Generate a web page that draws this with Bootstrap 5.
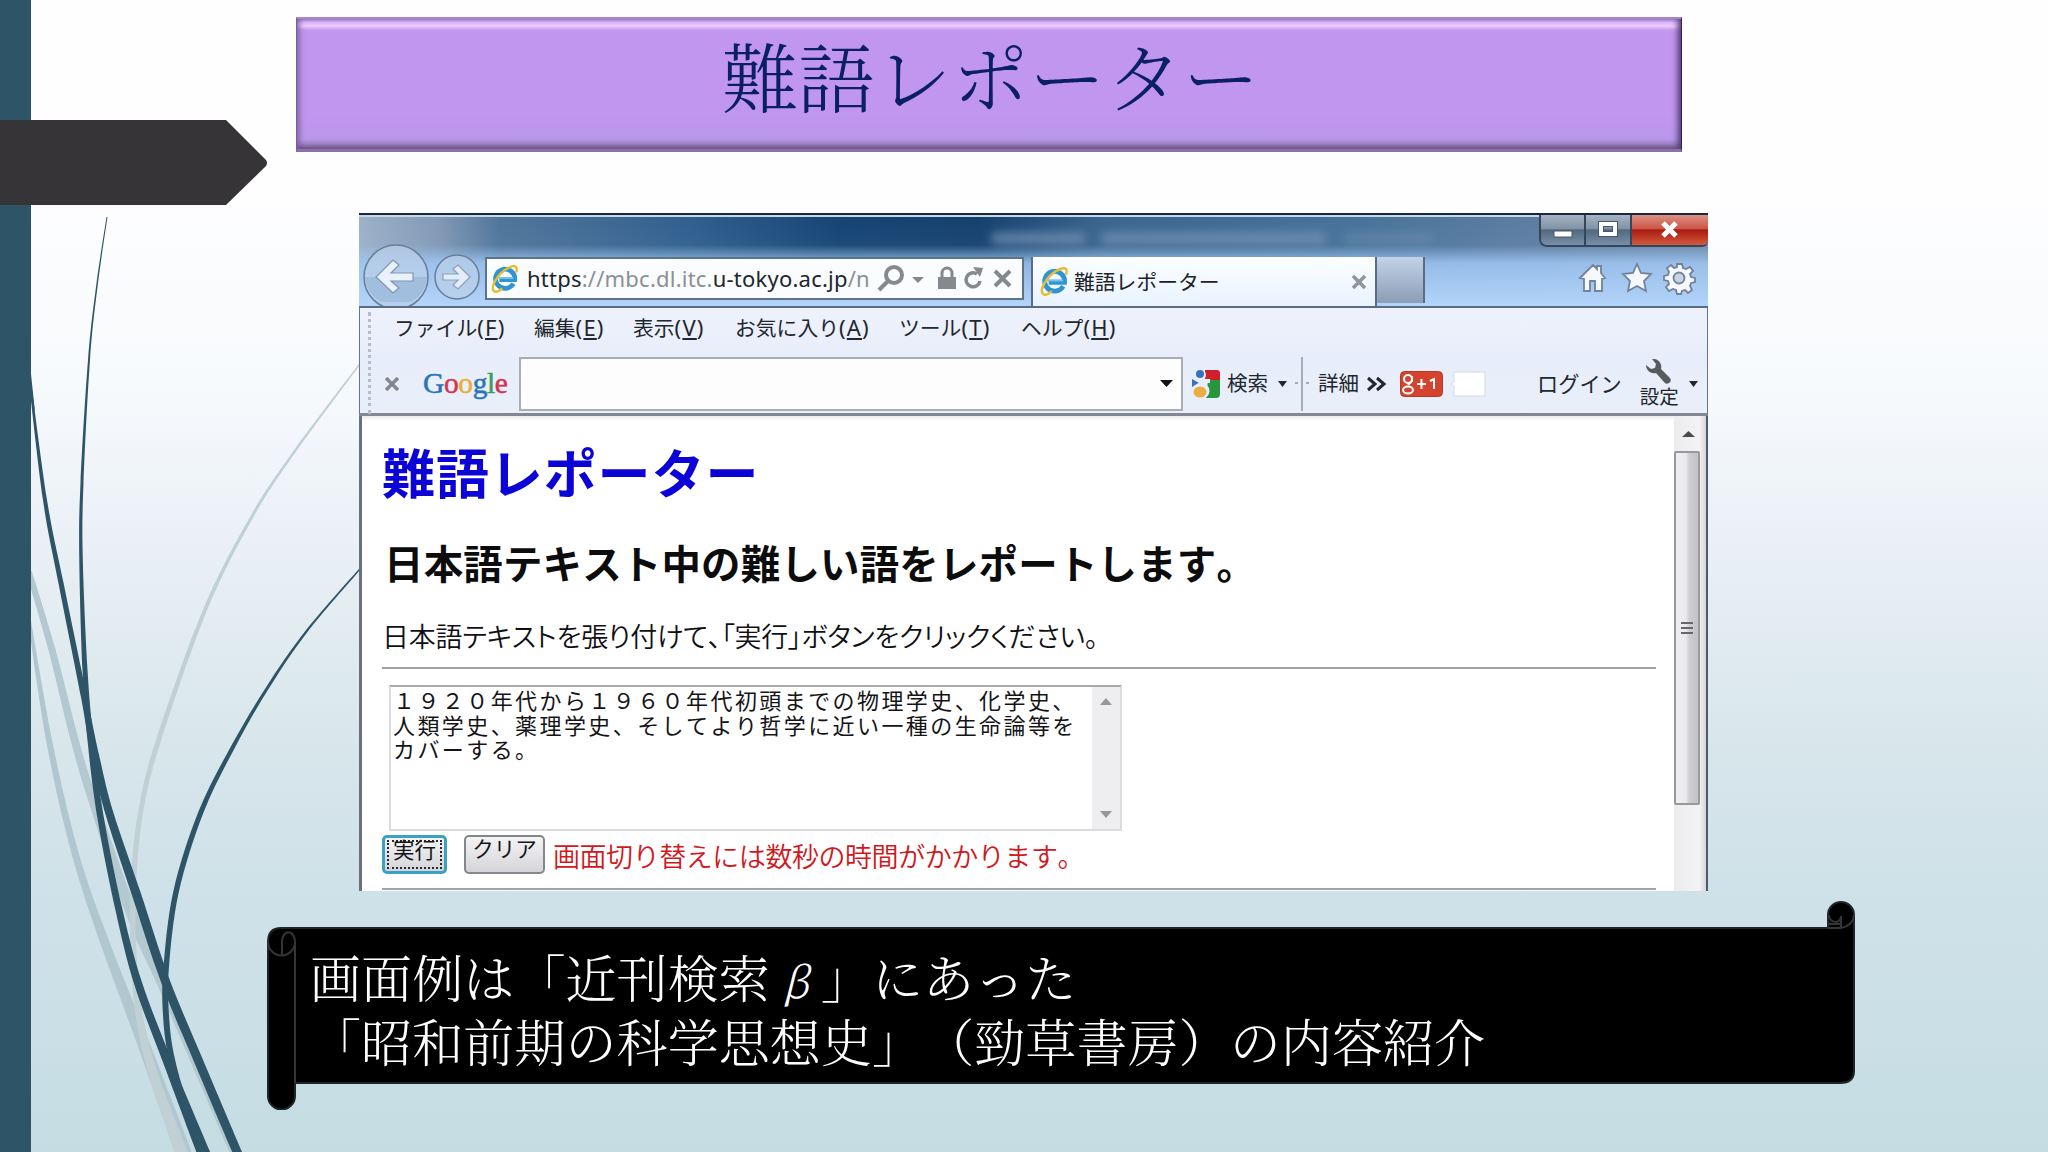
<!DOCTYPE html>
<html lang="ja">
<head>
<meta charset="utf-8">
<title>難語レポーター</title>
<link href="https://cdn.jsdelivr.net/npm/bootstrap@5.3.0/dist/css/bootstrap.min.css" rel="stylesheet">
<style>
body{margin:0;overflow:hidden;font-family:"Noto Sans CJK JP",sans-serif}
.slide{width:2048px;height:1152px;background:linear-gradient(#fefefe 0,#fefeff 190px,#f6f9fc 400px,#eaf0f6 540px,#dce9ed 690px,#d1e2e9 850px,#cadfe6 1040px,#c5dce3 1152px);overflow:hidden}
.decor{left:0;top:0;z-index:0}
.plate{width:1386px;height:135px;margin:17px 0 61px 296px;border-style:solid;border-width:2px 1px 3px 1px;border-color:#a586cd #2e2248 #8a72a8 #76609b;background:linear-gradient(#b48fe0 0,#e3bbfb 4px,#eec9ff 7px,#c79bef 11px,#c096ee 14px,#c096ee 96px,#ba97e9 120px,#9c80c4 125px,#745d8c 129px,#8b73a6 131px);box-shadow:inset 5px 0 6px -3px #75589c,inset -6px 0 6px -3px #4c3870;z-index:1}
.plate h1{font-family:"Noto Serif CJK JP","Noto Sans CJK JP",serif;font-weight:300;font-size:76.7px;line-height:110px;color:#0b1f66;margin:0;padding-left:3px;letter-spacing:.2px}
.win{width:1349px;height:678px;margin-left:359px;z-index:1;background:#fdfdfe}
.chrome{height:93px;border-top:2px solid #17283c;background:linear-gradient(180deg,rgba(255,255,255,0) 0,rgba(190,210,235,.05) 30px,rgba(160,200,245,.85) 48px,#b4d4fa 100%),linear-gradient(90deg,#9db1c8 0,#8199b5 80px,#50759b 140px,#2f5f8d 330px,#154472 480px,#14406e 620px,#3a648e 740px,#48729a 1000px,#5f7fa2 1200px,#6c88a8 100%)}
.chrome:before{content:"";position:absolute;left:0;right:0;top:0;height:2px;background:#c8d8e6}
.shade{filter:blur(4px);background:#7595b6;height:13px;border-radius:6px;opacity:.65}
.addr{width:539px;height:43px;border:2px solid #5c7488;background:#fbfcfe;font-family:"Noto Sans",sans-serif;font-size:22px;color:#8a9096}
.addr b{font-weight:400;color:#20262b}
.addr .url{width:341px;white-space:nowrap;letter-spacing:.22px}
.tabon{width:346px;height:49px;border-left:2px solid #596c82;border-right:2px solid #596c82;background:linear-gradient(#fcfeff,#e8f3fe);font-size:20.8px;color:#1d2228}
.tabnew{width:48px;height:46px;border-right:2px solid #596c82;background:linear-gradient(#c3d3e6,#8b9db7)}
.wbtns{right:0;top:0;width:169px;height:32px;border:2px solid #35455a;border-top:0;border-right:0;border-radius:0 0 6px 8px;overflow:hidden}
.wbtns>div{background:linear-gradient(#a5b4c4 0,#8193a6 45%,#52687f 50%,#7790a8 100%);width:46px;border-right:2px solid #35455a}
.wbtns>div:last-child{background:linear-gradient(#dc9185 0,#cc5647 45%,#a91c12 50%,#d35a3d 100%);width:77px;border-right:0}
.bars{height:110px;border:1px solid #64748c;border-top:2px solid #596c84;border-bottom:3px solid #818793;background:linear-gradient(#eef2fc,#e7edfa 50%,#eaf0fa);color:#22262d}
.grip{left:8px;top:4px;width:3px;height:102px;border-left:3px dotted #b3bdcd}
.menus{font-size:20.8px;line-height:38px;height:48px;padding-left:34px;white-space:nowrap}
.menus span{display:block}
.menus i{font-style:normal;font-family:"Noto Sans",sans-serif;font-size:22px;letter-spacing:1.2px}
.tools{height:56px;font-size:20.5px;white-space:nowrap}
.gbox{width:664px;height:54px;border:2px solid #a9adb4;background:#fdfdfe}
.logo{font-family:"Liberation Serif",serif;font-size:29.5px;letter-spacing:-.4px;width:96px;-webkit-text-stroke:.5px;margin-top:-2px}
.doc{height:475px;border-left:3px solid #6b717b;border-right:2px solid #4c5a6e}
.page{width:1312px;padding-left:20px;white-space:nowrap;background:linear-gradient(#ececef,#fff 5px);font-kerning:none;text-spacing-trim:space-all}
.page h2{font-weight:700;font-size:53px;letter-spacing:.9px;line-height:60px;color:#0c04d6;margin:0;padding-top:25px}
.page h3{font-weight:700;font-size:39.4px;letter-spacing:.25px;line-height:50px;color:#0c0c0c;margin:0;padding:36px 0 0 2px}
.page p{font-size:27px;font-feature-settings:"palt";letter-spacing:-.2px;line-height:36px;margin:0;padding-top:31px;font-weight:350;color:#101014}
.rule{width:1274px;height:2px;background:#a2a2a6}
.area{width:733px;height:146px;margin:16px 0 4px 7px;border:2px solid #dcdce0;border-top-color:#aaaaae;font-size:22px;letter-spacing:2.42px;line-height:24.5px;color:#141417}
.area .body{padding:0 0 0 2px}
.rail{width:28px;background:#eeeef1}
.pbtn{height:39px;border:2px solid #83868a;border-radius:5px;background:linear-gradient(#f4f4f5,#d5d5d9);font-size:21.5px;line-height:22px;color:#151518}
.pbtn.go{border:3px solid #3aa0c4;width:65px;padding:2px}
.pbtn.go>div{border:2px dotted #25292d;height:29px;line-height:14px}
.warn{font-size:27px;letter-spacing:-.45px;color:#d01820;font-weight:350;line-height:42px}
.vbar{width:32px;background:linear-gradient(90deg,#ececef,#f3f3f5 80%,#d5d5d9)}
.thumb{width:26px;height:354px;border:2px solid #97999d;border-radius:2px;background:linear-gradient(90deg,#efeff1 0,#eaeaec 45%,#cfcfd1 60%,#c3c3c6)}
.note{width:1588px;height:209px;margin:10px 0 0 267px;z-index:1}
.note .txt{left:43px;top:45px;color:#fff;font-family:"Noto Serif CJK JP","Noto Sans CJK JP",serif;font-weight:300;font-size:51.1px;line-height:61px;white-space:nowrap;font-kerning:none;font-feature-settings:"chws" 0;text-spacing-trim:space-all}
.txt i{display:inline-block;width:51px;text-align:center;font-size:43px}
svg{display:block;flex:none}
</style>
</head>
<body>
<svg width="0" height="0" class="position-absolute">
<symbol id="ie" viewBox="0 0 30 30"><path d="M24 20A10.3 10.3 0 1 1 25.4 15.8H9" fill="none" stroke="#2f95d2" stroke-width="5"/><path d="M8 14h16" stroke="#75bfe9" stroke-width="2"/><path d="M3 28C-1 23 8 9 17 4S29 1 27 8M3 28c3 2 7-1 9-3" fill="none" stroke="#e7bd35" stroke-width="2.6"/></symbol>
</svg>
<main class="slide position-relative d-flex flex-column">
<svg class="decor position-absolute" width="2048" height="1152" id="decor">
<g id="curves"></g>
<path d="M0 0H31V374L35 412L31 400V1152H0Z" fill="#2e5468"/>
<path d="M0 120H226L266 160Q268 163 266 166L226 205H0Z" fill="#373438"/>
</svg>
<header class="plate position-relative text-center flex-shrink-0"><h1>難語レポーター</h1></header>

<section class="win position-relative flex-shrink-0 d-flex flex-column">
<div class="chrome position-relative d-flex align-items-start flex-shrink-0">
<div class="shade position-absolute" style="left:632px;top:17px;width:95px"></div>
<div class="shade position-absolute" style="left:742px;top:17px;width:225px"></div>
<div class="shade position-absolute" style="left:985px;top:17px;width:90px;opacity:.35"></div>
<svg width="126" height="91" viewBox="0 -1 126 91">
<g stroke="#687f99" stroke-width="1.500" fill="#b9cfe8" fill-opacity=".75"><circle cx="37" cy="61" r="32"/><circle cx="98" cy="61" r="22"/></g>
<path d="M6 61h62a31 31 0 0 1-16 25H22A31 31 0 0 1 6 61z" fill="#8fb0d3" opacity=".55"/>
<path d="M17 61L34 44 40 49 32 57H54V65H32L40 72 34 77Z" fill="#e9f2fb" stroke="#8196ad" stroke-width="1.2"/>
<path d="M111 61L99 49 94 53 99 58H84V64H99L94 69 99 73Z" fill="#e2edf9" stroke="#8ba0b9" stroke-width="1.2"/></svg>
<div class="addr d-flex align-items-center" style="margin-top:42px;padding-left:4px">
<svg width="28" height="28"><use href="#ie"/></svg>
<div class="url" style="margin-left:8px"><b>https</b>://mbc.dl.itc.<b>u-tokyo.ac.jp</b>/n</div>
<svg width="142" height="32" viewBox="0 0 142 32" style="margin-left:8px" fill="none" stroke="#85888d" stroke-width="4"><circle cx="18" cy="12" r="8"/><path d="M12 18L3 27"/><path d="M36 14h12l-6 6z" fill="#85888d" stroke="none"/><path d="M62 14h18v12H62z" fill="#85888d" stroke="none"/><path d="M66 15V10a5 5 0 0 1 10 0V15" stroke-width="3"/><path d="M104 18a7 7 0 1 1-3-7" stroke-width="3.500"/><path d="M97 4l10 1-3 9z" fill="#85888d" stroke="none"/><path d="M119 8l15 15M134 8l-15 15"/></svg>
</div>
<div class="tabon d-flex align-items-center" style="margin:42px 0 0 7px;padding:0 9px 0 7px"><svg width="29" height="29"><use href="#ie"/></svg><span class="me-auto" style="margin-left:5px">難語レポーター</span><svg width="14" height="14" stroke="#8e959c" stroke-width="3.500"><path d="M1 1l12 12M13 1L1 13"/></svg></div>
<div class="tabnew" style="margin-top:42px"></div>
<svg width="120" height="34" viewBox="0 0 120 34" class="ms-auto" style="margin:46px 12px 0 0" fill="#f5f8fc" stroke="#71839a" stroke-width="1.800">
<path d="M4 17L17 4l4 4V5h4v7l4 5-3 1v12h-7V20h-5v10H8V18z"/><path d="M61 3l4 9 10 1-7 7 2 10-9-5-9 5 2-10-7-7 10-1z"/>
<path d="M101 3h5l1 4 3 1 4-2 3 4-3 3 1 3 4 1v4l-4 1-1 3 2 4-4 3-3-3-3 1-1 3h-4l-1-4-3-1-4 2-3-4 3-3-1-3-4-1v-4l4-1 1-3-2-4 4-3 3 3 3-1z"/><circle cx="103" cy="17" r="5.500" fill="#c9d3df"/></svg>
<div class="wbtns position-absolute d-flex"><div class="d-flex justify-content-center align-items-center"><svg width="22" height="20"><path d="M2 11h18v6H2z" fill="#fff" stroke="#46566a"/></svg></div><div class="d-flex justify-content-center align-items-center"><svg width="22" height="20"><path d="M4 4h14v10H4z" fill="none" stroke="#46566a" stroke-width="6"/><path d="M4 4h14v10H4z" fill="none" stroke="#fff" stroke-width="4"/></svg></div><div class="d-flex justify-content-center align-items-center"><svg width="20" height="20" stroke="#fff" stroke-width="5"><path d="M3 3l13 13M16 3L3 16"/></svg></div></div>
</div>

<div class="bars position-relative flex-shrink-0">
<div class="grip position-absolute"></div>
<nav class="menus d-flex"><span style="width:140px">ファイル<i>(<u>F</u>)</i></span><span style="width:99px">編集<i>(<u>E</u>)</i></span><span style="width:102px">表示<i>(<u>V</u>)</i></span><span style="width:164px">お気に入り<i>(<u>A</u>)</i></span><span style="width:122px">ツール<i>(<u>T</u>)</i></span><span>ヘルプ<i>(<u>H</u>)</i></span></nav>
<div class="tools d-flex align-items-center">
<svg width="14" height="14" style="margin:0 24px 0 25px" stroke="#85898f" stroke-width="3.500"><path d="M1 1l12 12M13 1L1 13"/></svg>
<div class="logo"><span style="color:#2874b5">G</span><span style="color:#d8324f">o</span><span style="color:#e9ae36">o</span><span style="color:#2874b5">g</span><span style="color:#3b9b5c">l</span><span style="color:#d8324f">e</span></div>
<div class="gbox d-flex align-items-center justify-content-end"><svg width="23" height="10"><path d="M2 1h13L8.500 8z" fill="#111"/></svg></div>
<svg width="30" height="30" viewBox="0 0 30 30" style="margin:0 6px 0 8px"><path d="M14 1h12q3 0 3 3v8H14z" fill="#d0202a"/><path d="M17 11h12v14q0 4-4 4H15z" fill="#28963f"/><circle cx="9" cy="6" r="6" fill="#e9effa"/><circle cx="9" cy="5" r="4" fill="#3972b8"/><path d="M12 10h7v4h-7z" fill="#e9effa"/><path d="M1 10l7 4-7 4z" fill="#3972b8"/><ellipse cx="10" cy="22" rx="8.500" ry="8" fill="#e9effa"/><ellipse cx="9" cy="23" rx="6.500" ry="5.500" fill="#e9ad42"/></svg>
<span style="margin-top:-3px">検索</span>
<svg width="34" height="54" style="margin:0 7px 0 9px"><path d="M1 24h9l-4.500 6z" fill="#22262d"/><path d="M18 26h3M29 26h3" stroke="#a7adb7" stroke-width="2"/><path d="M25 0v54" stroke="#a7adb7" stroke-width="2"/></svg>
<span style="margin-top:-3px">詳細</span>
<svg width="20" height="16" class="ms-2" fill="none" stroke="#22262d" stroke-width="3"><path d="M1 2l7 6-7 6M10 2l7 6-7 6"/></svg>
<svg width="43" height="26" viewBox="0 0 43 26" style="margin-left:13px"><rect x=".5" y=".5" width="42" height="25" rx="4" fill="#d4432e" stroke="#b5392a"/><g fill="none" stroke="#fff" stroke-width="2"><ellipse cx="8" cy="8" rx="4" ry="4"/><ellipse cx="8" cy="19" rx="5" ry="3.500"/><path d="M12 5v5l-4 4M17 13h9M21.500 8v10M30 10l4-2v10"/></g></svg>
<svg width="36" height="26" style="margin-left:8px"><path d="M3 1h31v24H3V15l-3-2 3-2z" fill="#fff" stroke="#d5d8de"/></svg>
<span style="margin:-3px 0 0 50px;font-size:21.2px">ログイン</span>
<div class="d-flex flex-column align-items-center" style="margin-left:18px;font-size:19.500px;line-height:24px;margin-top:-4px"><svg width="28" height="27" viewBox="0 0 28 27"><path d="M7 2a8 8 0 0 1 9 10l9 9q2 3-1 5t-5-1L11 16A8 8 0 0 1 1 8l5 4 4-1 1-4z" fill="#565b5c"/></svg><span>設定</span></div>
<svg width="10" height="8" style="margin-left:10px"><path d="M0 1h9L4.500 7z" fill="#22262d"/></svg>
</div>
</div>

<div class="doc d-flex flex-shrink-0">
<div class="page">
<h2>難語レポーター</h2>
<h3>日本語テキスト中の難しい語をレポートします。</h3>
<p>日本語テキストを張り付けて、「実行」ボタンをクリックください。</p>
<div class="rule" style="margin-top:13px"></div>
<div class="area d-flex"><div class="body flex-grow-1">１９２０年代から１９６０年代初頭までの物理学史、化学史、<br>人類学史、薬理学史、そしてより哲学に近い一種の生命論等を<br>カバーする。</div>
<div class="rail d-flex flex-column justify-content-between align-items-center py-2"><svg width="12" height="16"><path d="M0 10l6-7 6 7z" fill="#96979a"/></svg><svg width="12" height="16"><path d="M0 6l6 7 6-7z" fill="#96979a"/></svg></div></div>
<div class="d-flex text-center" style="height:39px"><div class="pbtn go"><div>実行</div></div><div class="pbtn" style="width:81px;margin:0 8px 0 17px">クリア</div><span class="warn">画面切り替えには数秒の時間がかかります。</span></div>
<div class="rule" style="margin-top:14px"></div>
</div>
<div class="vbar d-flex flex-column"><svg width="28" height="35"><path d="M8 21l6.500-6 6.500 6z" fill="#4a4a4a"/></svg><div class="thumb d-flex align-items-center justify-content-center"><svg width="12" height="16"><path d="M0 3h12M0 8h12M0 13h12" stroke="#66686c" stroke-width="2"/></svg></div></div>
</div>
</section>

<footer class="note position-relative flex-shrink-0">
<svg width="1588" height="209" viewBox="0 0 1588 209" stroke="#1d2526" stroke-width="2">
<path d="M14 27H1561V14A13 13 0 0 1 1587 14V170Q1587 182 1573 182H28V195A13.500 13.500 0 0 1 1 195V41Q1 27 14 27Z" fill="#000"/>
<path d="M28 182V41A6 9 0 0 0 15 41V54M1 41A13.500 13.500 0 0 0 28 41M1561 27H1573Q1586 25 1587 14M1562 14C1562 22 1574 24 1574 15V27M1561 23H1574" fill="none" stroke="#333635"/></svg>
<div class="txt position-absolute">画面例は「近刊検索<i>β</i>」にあった<br>「昭和前期の科学思想史」（勁草書房）の内容紹介</div>
</footer>
</main>
<script>
// Each blade is a list of [x, y, thickness]; the outline is a smooth spline down one side and back up the other.
const blades=[
["#b3c8cf",[[29,572,6],[52,650,7],[76,745,8],[96,810,9],[133,917,11],[165,990,10],[233,1154,5]]],
["#b1c7cf",[[29,618,3],[50,745,6],[75,853,7],[105,943,9],[142,1040,12],[184,1154,16]]],
["#c1d0d4",[[370,352,1],[359,365,1.5],[290,458,2.5],[250,520,3],[205,610,4],[158,742,5],[141,810,5],[134,873,5.500],[133,940,6],[138,1007,7],[152,1070,9],[182,1154,12]]],
["#2e5468",[[29,374,2],[45,500,4],[61,583,5],[84,697,6],[95,755,8],[109,812,8],[136,893,9],[165,980,9],[199,1062,9],[238,1154,9]]],
["#2e5468",[[107,217,1],[97,285,1.5],[89,360,2],[82,483,3],[81,557,3.5],[85,670,5],[91,745,6],[101,820,6.500],[119,910,7],[138,983,8],[168,1063,9],[204,1154,13]]],
["#2e5468",[[370,558,1],[359,570,1.5],[306,632,2.2],[268,687,3],[234,745,4],[201,812,5],[176,892,5.500],[166,970,5.500],[166,1015,6],[171,1055,6],[184,1103,7],[204,1154,12]]]];
const spline=(p)=>{let d="";for(let i=0;i<p.length-1;i++){const a=p[i-1]||p[i],b=p[i],c=p[i+1],e=p[i+2]||c;
d+=`C${b[0]+(c[0]-a[0])/6} ${b[1]+(c[1]-a[1])/6} ${c[0]-(e[0]-b[0])/6} ${c[1]-(e[1]-b[1])/6} ${c[0]} ${c[1]}`}return d};
document.getElementById("curves").innerHTML=blades.map(([color,pts])=>{
const side=s=>pts.map((p,i)=>{const a=pts[i-1]||p,c=pts[i+1]||p,dx=c[0]-a[0],dy=c[1]-a[1],l=Math.hypot(dx,dy);return[p[0]-s*dy/l*p[2]/2,p[1]+s*dx/l*p[2]/2]});
const L=side(1),R=side(-1).reverse();
return `<path fill="${color}" d="M${L[0]}${spline(L)}L${R[0]}${spline(R)}Z"/>`}).join("");
</script>
<script src="https://cdn.jsdelivr.net/npm/bootstrap@5.3.0/dist/js/bootstrap.bundle.min.js"></script>
</body>
</html>
